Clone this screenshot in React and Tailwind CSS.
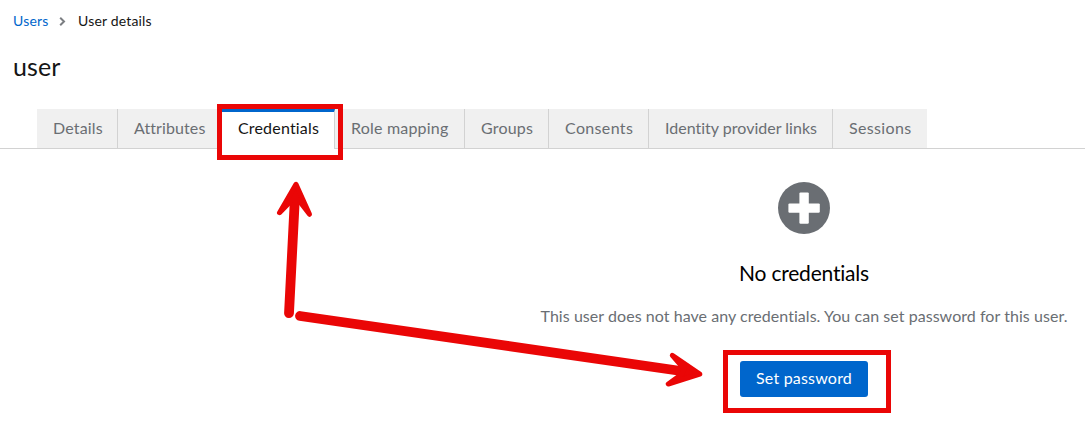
import React from "react";

const tabs = [
  { label: "Details", size: "w-[81px]", spacing: "tracking-[0.15px]" },
  { label: "Attributes", size: "w-[104px]", spacing: "tracking-[0.1px]" },
  { label: "Credentials", size: "w-[113px]", spacing: "tracking-[0.18px]", active: true },
  { label: "Role mapping", size: "w-[130px]", spacing: "tracking-[0.2px]" },
  { label: "Groups", size: "w-[84px]", spacing: "tracking-[0.2px]" },
  { label: "Consents", size: "w-[100px]", spacing: "tracking-[0.35px]" },
  { label: "Identity provider links", size: "w-[184px]", spacing: "tracking-[0.01px]" },
  { label: "Sessions", size: "w-[94px]", spacing: "tracking-[0.35px]", last: true },
];

function Tab({ label, size, spacing, active, last }) {
  const tone = active
    ? "border-t-[3px] border-t-[#0066cc] bg-white text-[#151515]"
    : "border-b border-b-[#d2d2d2] bg-[#f0f0f0] pt-[3px] text-[#6a6e73]";
  const divider = last ? "" : "border-r border-r-[#d2d2d2]";
  return (
    <button className={`flex h-10 shrink-0 items-start whitespace-nowrap pl-4 text-left text-base leading-[31px] ${size} ${spacing} ${tone} ${divider}`}>
      {label}
    </button>
  );
}

function Annotations() {
  return (
    <svg className="pointer-events-none absolute inset-0" width="1085" height="424" viewBox="0 0 1085 424" fill="none" stroke="#ea0606">
      <rect x="219.5" y="106.5" width="121" height="51" strokeWidth="5" />
      <rect x="725.5" y="352.5" width="163" height="58" strokeWidth="5" />
      <g strokeLinecap="round" strokeLinejoin="round">
        <path d="M289 313.2 295 196" strokeWidth="9.8" />
        <path d="M296 184.3 279.5 212.7 292 200 298.5 200 309.5 214.3Z" fill="#ea0606" strokeWidth="5" />
        <path d="M300 316 688 372" strokeWidth="9.8" />
        <path d="M699.8 374 672.3 355.3 684 369 682 374 668.3 384Z" fill="#ea0606" strokeWidth="5" />
      </g>
    </svg>
  );
}

export default function App() {
  return (
    <main className="relative h-[424px] w-[1085px] overflow-hidden bg-white font-['Lato',sans-serif] text-[#151515]">
      <nav className="flex h-[42px] items-center pl-[13px] text-sm tracking-[0.18px]">
        <a className="w-[46px] text-[#0066cc]">Users</a>
        <svg className="mr-3 h-[9px] w-[7px]" viewBox="0 0 7 9" fill="none" stroke="#7b7e82" strokeWidth="2">
          <path d="M1.2 .8 5 4.5 1.2 8.2" />
        </svg>
        <span>User details</span>
      </nav>
      <h1 className="h-[67px] pl-[13px] pt-[6px] text-[25px] leading-[36px] tracking-[0.1px]">user</h1>
      <div className="flex">
        <div className="h-10 w-[37px] shrink-0 border-b border-[#d2d2d2]" />
        {tabs.map((tab) => <Tab key={tab.label} {...tab} />)}
        <div className="h-10 flex-1 border-b border-[#d2d2d2]" />
      </div>
      <section className="ml-[523px] flex w-[562px] flex-col items-center pt-[33px]">
        <svg className="h-[52px] w-[52px]" viewBox="0 0 52 52">
          <circle cx="26" cy="26" r="26" fill="#6a6e73" />
          <rect x="21.4" y="10.4" width="9.4" height="31.4" rx="1.2" fill="white" />
          <rect x="10.4" y="21.4" width="31.4" height="9.4" rx="1.2" fill="white" />
        </svg>
        <h2 className="mt-[23px] h-8 whitespace-nowrap text-[21px] leading-8 tracking-[-0.2px] text-black">No credentials</h2>
        <p className="mt-[15px] h-6 whitespace-nowrap text-base leading-6 tracking-[0.05px] text-[#6a6e73]">This user does not have any credentials. You can set password for this user.</p>
        <button className="mt-[33px] h-9 w-32 whitespace-nowrap rounded-[3px] bg-[#0066cc] text-base leading-[34px] tracking-[0.2px] text-white"><span className="block h-9">Set password</span></button>
      </section>
      <Annotations />
    </main>
  );
}
